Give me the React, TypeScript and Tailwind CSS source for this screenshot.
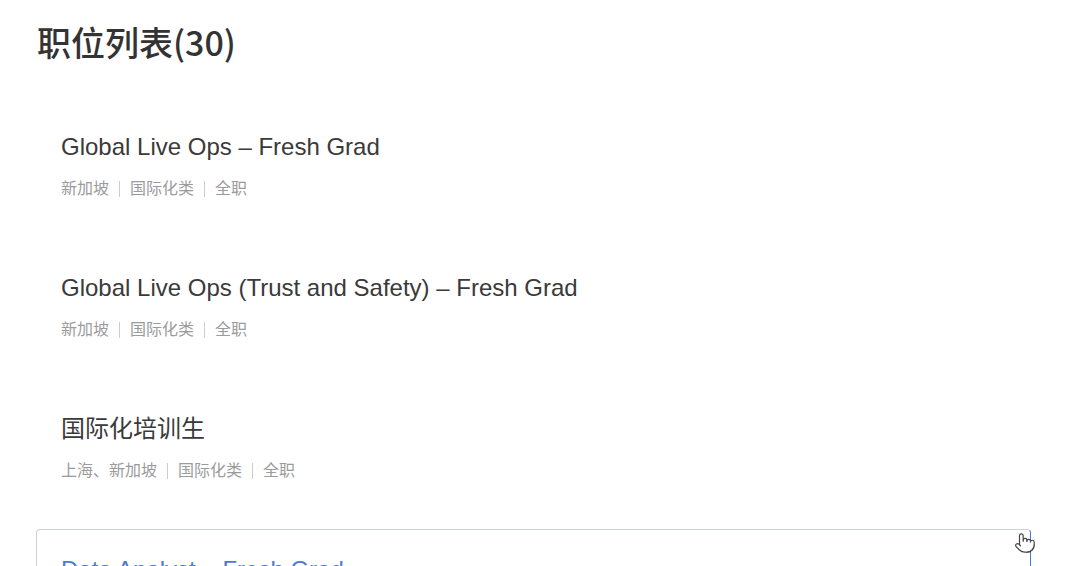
import { Pointer } from "lucide-react";

type Job = {
  title: string;
  tags: string[];
};

const jobs: Job[] = [
  { title: "Global Live Ops – Fresh Grad", tags: ["新加坡", "国际化类", "全职"] },
  { title: "Global Live Ops (Trust and Safety) – Fresh Grad", tags: ["新加坡", "国际化类", "全职"] },
  { title: "国际化培训生", tags: ["上海、新加坡", "国际化类", "全职"] },
];

const JobCard = ({ job, active }: { job: Job; active?: boolean }) => {
  return (
    <li
      className={
        active
          ? "relative rounded border border-[#ccd3df] border-r-[#3f7be0] px-6 pt-[23px] pb-[23px]"
          : "rounded border border-transparent px-6 pt-[23px] pb-[23px]"
      }
    >
      <h3
        className={
          active
            ? "text-[24px] leading-[34px] text-[#4a7bd1]"
            : "text-[24px] leading-[34px] text-[#3a3a3a]"
        }
      >
        {job.title}
      </h3>
      <p className="mt-[15px] flex items-center text-[16px] leading-5 text-[#9b9b9b]">
        {job.tags.map((tag, i) => (
          <span key={i} className="flex items-center">
            {i > 0 && <span className="mx-[10px] inline-block h-[16px] w-px bg-[#cdcdcd]" />}
            {tag}
          </span>
        ))}
      </p>
      {active && (
        <Pointer
          className="absolute right-[-6px] top-[2px] h-[22px] w-[22px] fill-white text-[#444]"
          strokeWidth={1.3}
        />
      )}
    </li>
  );
};

const App = () => {
  return (
    <div
      className="h-[566px] overflow-hidden bg-white pl-9 pr-12 pt-[18px]"
      style={{ fontFamily: '"Liberation Sans", "Noto Sans CJK SC", sans-serif' }}
    >
      <h1
        className="pl-px text-[34px] leading-[48px] font-medium text-[#333]"
        style={{ fontFamily: '"Noto Sans CJK SC", sans-serif' }}
      >
        职位列表(30)
      </h1>
      <ul className="mt-[40px] flex flex-col gap-6">
        {jobs.map((job) => (
          <JobCard key={job.title} job={job} />
        ))}
        <JobCard job={{ title: "Data Analyst – Fresh Grad", tags: ["上海", "数据类", "全职"] }} active />
      </ul>
    </div>
  );
};

export default App;
